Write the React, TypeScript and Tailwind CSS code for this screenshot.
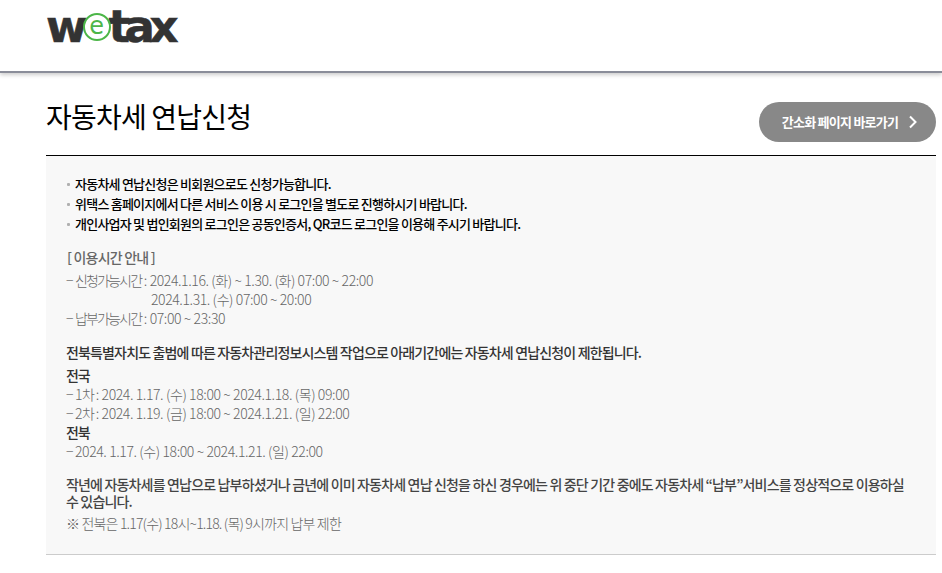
import React from "react";

const font = { fontFamily: '"Noto Sans CJK KR", "Noto Sans", sans-serif' };

function Logo() {
  return (
    <div className="flex items-end h-[31px] text-[#333333] font-black leading-none [-webkit-text-stroke:0.6px_#333333]" style={{ fontFamily: '"DejaVu Sans", sans-serif' }}>
      <span className="leading-[34px] -mb-[3px] tracking-[-3px] text-[45px]">w</span>
      <span className="w-[28px] h-[28px] rounded-full border-[2px] border-[#4cb648] bg-white flex items-center justify-center text-[#4cb648] text-[24px] font-normal leading-none shrink-0 mx-[-2px] z-10 [-webkit-text-stroke:0px]">
        <span className="-mt-[3px]">e</span>
      </span>
      <span className="leading-[34px] -mb-[3px] text-[45px] tracking-[-5.5px]">tax</span>
    </div>
  );
}

function Li({ children }: { children: React.ReactNode }) {
  return (
    <li className="flex items-center h-[20px]">
      <span className="w-[3px] h-[3px] bg-[#b0b0b0] ml-[1px] mr-[5px] shrink-0 rounded-[1px]" />
      <span>{children}</span>
    </li>
  );
}

function Dash() {
  return <span className="tracking-[-0.8px]">− </span>;
}

function H({ children }: { children: React.ReactNode }) {
  return <span className="tracking-[-1.85px]">{children}</span>;
}

export default function App() {
  return (
    <div className="bg-white w-[942px] h-[573px] overflow-hidden text-[#333333]" style={font}>
      <header className="h-[73px] pl-[46px] pt-[10px] border-b-[2px] border-[#8a8d99] shadow-[0_2px_4px_rgba(0,0,0,0.2)]">
        <Logo />
      </header>
      <main className="ml-[46px] w-[890px]">
        <div className="flex items-start justify-between h-[83px] border-b border-black">
          <h1 className="text-[28px] leading-[40px] text-black tracking-[-0.8px] mt-[23px]">자동차세 연납신청</h1>
          <button className="w-[177px] h-[40px] mt-[29px] rounded-full bg-[#888888] text-white text-[13px] font-bold tracking-[-0.75px] flex items-center justify-center gap-[10px] pl-[5px]">
            <span>간소화 페이지 바로가기</span>
            <svg width="10" height="14" viewBox="0 0 10 14" fill="none" stroke="white" strokeWidth="2"><path d="M2 1.5 7.5 7 2 12.5" /></svg>
          </button>
        </div>
        <section className="bg-[#f8f8f8] h-[399px] border-b border-[#cccccc] pl-[20px] pr-[30px] pt-[18px] text-[14px] tracking-[-0.4px]">
          <ul className="text-black font-medium leading-[20px] text-[13px] tracking-[-0.77px]">
            <Li>자동차세 연납신청은 비회원으로도 신청가능합니다.</Li>
            <Li>위택스 홈페이지에서 다른 서비스 이용 시 로그인을 별도로 진행하시기 바랍니다.</Li>
            <Li>개인사업자 및 법인회원의 로그인은 공동인증서, QR코드 로그인을 이용해 주시기 바랍니다.</Li>
          </ul>
          <p className="mt-[14px] pl-[1px] font-medium text-[#666666] leading-[19px] tracking-[-0.8px]">[ 이용시간 안내 ]</p>
          <div className="mt-[4px] text-[#666666] leading-[19px] font-light">
            <p><Dash /><H>신청가능시간</H> : 2024.1.16. (화) ~ 1.30. (화) 07:00 ~ 22:00</p>
            <p className="pl-[85px]">2024.1.31. (수) 07:00 ~ 20:00</p>
            <p><Dash /><H>납부가능시간</H> : 07:00 ~ 23:30</p>
          </div>
          <p className="mt-[15px] font-medium text-[#333333] leading-[19px] tracking-[-0.85px]">전북특별자치도 출범에 따른 자동차관리정보시스템 작업으로 아래기간에는 자동차세 연납신청이 제한됩니다.</p>
          <p className="mt-[4px] font-medium text-[#333333] leading-[19px] tracking-[-1.2px]">전국</p>
          <div className="text-[#666666] font-light leading-[19px]">
            <p><Dash />1<H>차</H> : 2024. 1.17. (수) 18:00 ~ 2024.1.18. (목) 09:00</p>
            <p><Dash />2<H>차</H> : 2024. 1.19. (금) 18:00 ~ 2024.1.21. (일) 22:00</p>
          </div>
          <p className="font-medium text-[#333333] leading-[19px] tracking-[-1.2px]">전북</p>
          <p className="text-[#666666] font-light leading-[19px]"><Dash />2024. 1.17. (수) 18:00 ~ 2024.1.21. (일) 22:00</p>
          <p className="mt-[15px] font-medium text-[#444444] leading-[17px] tracking-[-0.83px]">작년에 자동차세를 연납으로 납부하셨거나 금년에 이미 자동차세 연납 신청을 하신 경우에는 위 중단 기간 중에도 자동차세 “납부”서비스를 정상적으로 이용하실 수 있습니다.</p>
          <p className="mt-[4px] text-[#666666] font-light leading-[19px] tracking-[-0.82px]">※ 전북은 1.17(수) 18시~1.18. (목) 9시까지 납부 제한</p>
        </section>
      </main>
    </div>
  );
}
